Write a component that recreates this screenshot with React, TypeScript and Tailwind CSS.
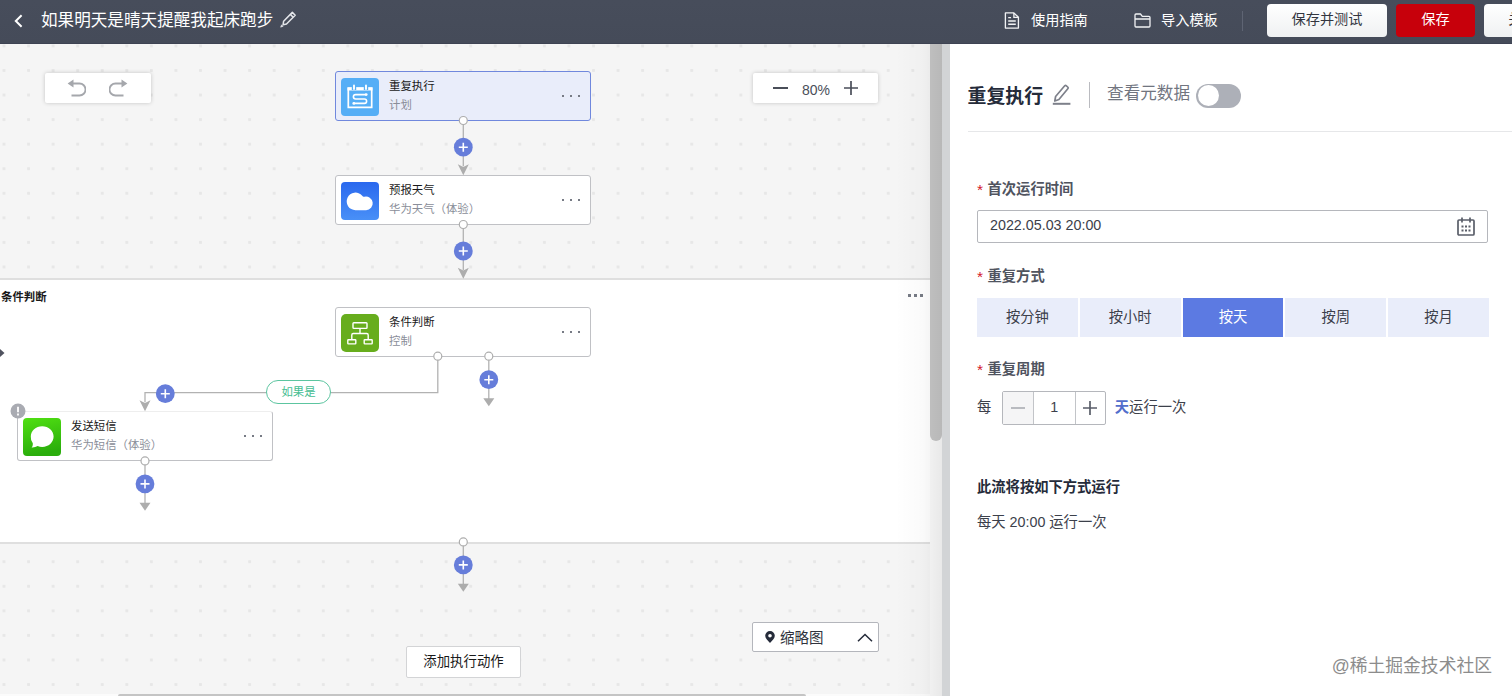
import { useState } from "react";
import type { ReactNode } from "react";
import clsx from "clsx";

const FREQUENCIES = ["按分钟", "按小时", "按天", "按周", "按月"];

const PencilIcon = () => (
  <svg className="w-[17px] h-[17px]" viewBox="0 0 16 16" fill="none" stroke="#e4e6ea" strokeWidth="1.4" strokeLinejoin="round">
    <path d="M3.4 9.6 11.6 1.3l2.7 2.7-8.2 8.3-3.2.6z" />
    <path d="M9.8 3.2l2.6 2.6" />
    <path d="M.6 15.2l.9-2.2 1.4 1.4z" fill="#e4e6ea" strokeWidth="0.6" />
  </svg>
);

const TopBar = () => (
  <header className="h-[43.5px] bg-linear-to-b from-[#474d5b] to-[#454b59] border-b border-[#3e4353] flex items-start flex-shrink-0 text-white overflow-hidden">
    <div className="h-[41px] w-[1002px] flex items-center pl-[13px] flex-shrink-0">
      <svg className="w-[11px] h-[14px]" viewBox="0 0 11 14" fill="none" stroke="#fff" strokeWidth="2">
        <path d="M8.6 1.2 2.8 7l5.8 5.8" />
      </svg>
      <span className="ml-[17px] text-[16.6px] leading-6 whitespace-nowrap">如果明天是晴天提醒我起床跑步</span>
      <span className="ml-[7px] -mt-0.5"><PencilIcon /></span>
    </div>
    <div className="h-[41px] flex items-center text-[14.2px] flex-shrink-0">
      <svg className="w-4 h-[17px] ml-[2px] -mt-px" viewBox="0 0 16 18" fill="none" stroke="#f1f2f4" strokeWidth="1.4">
        <path d="M1 1h9l4.8 4.6V17H1z" strokeLinejoin="round" />
        <path d="M10 1v4.6h4.8M4 6h3M4 9.5h8M4 13h8" />
      </svg>
      <span className="ml-[11px] w-[58px] whitespace-nowrap">使用指南</span>
      <svg className="w-[17px] h-[15px] ml-[45px]" viewBox="0 0 17 15" fill="none" stroke="#f1f2f4" strokeWidth="1.3">
        <path d="M1 13V2q0-1 1-1h4.5l1.8 2.4H15q1 0 1 1V13q0 1-1 1H2q-1 0-1-1zM1 6h15" strokeLinejoin="round" />
      </svg>
      <span className="ml-[10px] w-[58px] whitespace-nowrap">导入模板</span>
      <span className="ml-[23px] w-px h-5 bg-[#5e6473]" />
    </div>
    <div className="flex gap-[9px] ml-[24px] pt-1 text-[14.2px] flex-shrink-0">
      <button className="w-[120px] h-[33px] pb-[2px] rounded-sm bg-linear-to-b from-white to-[#eff1f2] text-[#33363f]">保存并测试</button>
      <button className="w-[79px] h-[33px] pb-[2px] rounded-sm bg-[#c7000b] text-white">保存</button>
      <button className="w-[77px] h-[33px] pb-[2px] rounded-sm bg-linear-to-b from-white to-[#eff1f2] text-[#33363f]">关闭</button>
    </div>
  </header>
);

const ScheduleIcon = () => (
  <svg className="w-[38px] h-[38px]" viewBox="0 0 38 38">
    <rect width="38" height="38" rx="4" fill="#55aef6" />
    <g fill="none" stroke="#fff">
      <path d="M7.3 10h23.400v19.300H7.300z" strokeWidth="1.700" />
      <path d="M6.500 11h25" strokeWidth="3" />
      <path d="M13 7v5M25 7v5" stroke="#55aef6" strokeWidth="4.400" />
      <path d="M13 7.500v3.500M25 7.500v3.500" strokeWidth="1.900" strokeLinecap="round" />
      <path d="M25 16.600H14.600a2.200 2.200 0 0 0 0 4.400h8.800a2.200 2.200 0 0 1 0 4.400H13" strokeWidth="1.600" />
    </g>
    <circle cx="25.2" cy="16.6" r="1.4" fill="#fff" />
    <circle cx="12.8" cy="25.4" r="1.4" fill="#fff" />
  </svg>
);

const WeatherIcon = () => (
  <svg className="w-[38px] h-[38px]" viewBox="0 0 38 38">
    <defs>
      <linearGradient id="weather" x1="0" y1="0" x2="0" y2="1">
        <stop offset="0" stopColor="#2a68ee" />
        <stop offset="1" stopColor="#4990f7" />
      </linearGradient>
    </defs>
    <rect width="38" height="38" rx="4" fill="url(#weather)" />
    <path d="M14.5 28.2a8.8 8.8 0 1 1 6.7-14.5c.7.8 1.1 1.2 2.1 1.1a6.8 6.8 0 1 1 1.8 13.4z" fill="#fff" />
  </svg>
);

const BranchIcon = () => (
  <svg className="w-[38px] h-[38px]" viewBox="0 0 38 38">
    <rect width="38" height="38" rx="5" fill="#67ad1d" />
    <g fill="none" stroke="#fff" strokeWidth="1.4">
      <rect x="12" y="8.8" width="14" height="5.6" rx="0.8" />
      <path d="M19 14.5v5M10.8 25.6v-4.6q0-1.5 1.5-1.5h13.4q1.5 0 1.5 1.5v4.6" />
      <rect x="6.8" y="25.7" width="8" height="4.2" rx="0.6" />
      <rect x="23.2" y="25.7" width="8" height="4.2" rx="0.6" />
    </g>
  </svg>
);

const MessageIcon = () => (
  <svg className="w-[38px] h-[38px]" viewBox="0 0 38 38">
    <defs>
      <linearGradient id="message" x1="0" y1="0" x2="0.2" y2="1">
        <stop offset="0" stopColor="#50df12" />
        <stop offset="1" stopColor="#2aad0c" />
      </linearGradient>
    </defs>
    <rect width="38" height="38" rx="4" fill="url(#message)" />
    <path d="M19.2 8.2c6.4 0 11.4 4.6 11.4 10.4S25.6 29 19.2 29c-1.700 0-3.200-.3-4.600-.9-1.700 1-3.500 1.400-6 1.300 1-.8 1.300-2 1.200-4.100a9.600 9.600 0 0 1-2-6.700c0-5.800 5-10.400 11.400-10.400z" fill="#fff" />
  </svg>
);

interface FlowNodeProps {
  title: string;
  subtitle: string;
  icon: ReactNode;
  className: string;
}

const FlowNode = ({ title, subtitle, icon, className }: FlowNodeProps) => (
  <div className={clsx("absolute w-[256px] h-[50px] border rounded-[3px] flex items-center pl-[5px] pr-[10px]", className)}>
    <div className="mt-px">{icon}</div>
    <div className="ml-[10px] flex-1 text-[11.4px] leading-[19.5px]">
      <div className="text-[#191919]">{title}</div>
      <div className="text-[#8a8e99]">{subtitle}</div>
    </div>
    <div className="flex gap-[6px]">
      <i className="w-[2px] h-[2px] bg-[#777b85]" />
      <i className="w-[2px] h-[2px] bg-[#777b85]" />
      <i className="w-[2px] h-[2px] bg-[#777b85]" />
    </div>
  </div>
);

const Port = ({ x, y }: { x: number; y: number }) => (
  <circle cx={x} cy={y} r="4" fill="#fff" stroke="#adadad" strokeWidth="1.2" />
);

const Plus = ({ x, y }: { x: number; y: number }) => (
  <g>
    <circle cx={x} cy={y} r="9.4" fill="#667dda" />
    <path d={`M${x - 4.5} ${y}h9M${x} ${y - 4.5}v9`} stroke="#fff" strokeWidth="1.6" />
  </g>
);

const Notched = ({ x, y }: { x: number; y: number }) => (
  <path d={`M${x} ${y}l-5.5-11 5.5 2.8 5.5-2.8z`} fill="#adadad" />
);

const Arrow = ({ x, y }: { x: number; y: number }) => (
  <path d={`M${x} ${y}l-5.5-8h11z`} fill="#adadad" />
);

// Координаты соединителей заданы относительно холста
const Connectors = () => (
  <svg className="absolute left-0 top-0 w-[930px] h-[650px]" viewBox="0 43.8 930 650">
    <g fill="none" stroke="#b2b2b2" strokeWidth="1.3">
      <path d="M463.3 120v46M463.3 224v46M437.8 356v36.5H145V402M488.8 356v44M145 461v44M463.3 541v44" />
    </g>
    <Notched x={463.3} y={175} />
    <Notched x={463.3} y={278.5} />
    <Notched x={145} y={411} />
    <Arrow x={488.8} y={406} />
    <Arrow x={145} y={510.5} />
    <Arrow x={463.3} y={591.5} />
    <Port x={463.3} y={120.3} />
    <Port x={463.3} y={224.3} />
    <Port x={437.8} y={356} />
    <Port x={488.8} y={356} />
    <Port x={145} y={460.7} />
    <Port x={463.3} y={541.7} />
    <Plus x={463.3} y={147} />
    <Plus x={463.3} y={250.8} />
    <Plus x={165.3} y={393.5} />
    <Plus x={488.8} y={379.5} />
    <Plus x={145} y={483.7} />
    <Plus x={463.3} y={564.7} />
  </svg>
);

const Canvas = () => (
  <main className="relative w-[950px] flex-shrink-0 overflow-hidden bg-[#f5f5f5] bg-[radial-gradient(circle,#e7e7e7_1.3px,transparent_1.9px)] bg-[size:24.57px_24.57px] bg-[position:-8.3px_14.2px]">
    {/* Блок условия */}
    <section className="absolute left-0 top-[234.5px] w-[930px] h-[265.5px] bg-white border-y-2 border-[#dfdfdf]">
      <div className="flex justify-between items-center pt-[7px] pr-[7px]">
        <h3 className="text-[11.4px] leading-5 pl-px font-bold text-[#191919]">条件判断</h3>
        <div className="flex gap-[3px] -mt-[3px]">
          <i className="w-[3px] h-[3px] bg-[#777b85]" />
          <i className="w-[3px] h-[3px] bg-[#777b85]" />
          <i className="w-[3px] h-[3px] bg-[#777b85]" />
        </div>
      </div>
      <svg className="w-[5px] h-[10px] mt-[41px]" viewBox="0 0 5 10">
        <path d="M0 1l4.5 4L0 9z" fill="#50535f" />
      </svg>
    </section>

    <FlowNode title="重复执行" subtitle="计划" icon={<ScheduleIcon />} className="left-[335px] top-[27.5px] bg-[#e9edfa] border-[#7088dd]" />
    <FlowNode title="预报天气" subtitle="华为天气（体验）" icon={<WeatherIcon />} className="left-[335px] top-[131.5px] bg-white border-[#c0c1c5]" />
    <FlowNode title="条件判断" subtitle="控制" icon={<BranchIcon />} className="left-[335px] top-[263.5px] bg-white border-[#c0c1c5]" />
    <FlowNode title="发送短信" subtitle="华为短信（体验）" icon={<MessageIcon />} className="left-[17px] top-[367.5px] bg-white border-[#c0c1c5] border-t-[#eeeeee]" />

    <Connectors />

    <div className="absolute left-[266px] top-[336.5px] w-[65px] h-[24px] pt-px rounded-full border-[1.5px] border-[#5cc5a0] bg-white text-[#45bd92] text-[11.4px] flex items-center justify-center">如果是</div>
    <svg className="absolute left-[10px] top-[359px] w-4 h-4" viewBox="0 0 16 16">
      <circle cx="8" cy="8" r="7.5" fill="#a9abb2" />
      <path d="M8 3.8v5.4M8 10.6v1.8" stroke="#fff" strokeWidth="1.8" />
    </svg>

    {/* Панели поверх холста */}
    <div className="absolute left-[45px] top-[29.5px] w-[106px] h-[30px] bg-white rounded-xs shadow-[0_0_4px_rgba(0,0,0,0.2)] flex items-center justify-center gap-[23px]">
      <svg className="w-[19px] h-[18px] -ml-[2px]" viewBox="0 0 19 18" fill="none" stroke="#a5a7ac" strokeWidth="1.8">
        <path d="M4 4.5h8.5a6 6 0 0 1 0 12H4.5" />
        <path d="M6.5.6v7.8L.6 4.5z" fill="#a5a7ac" stroke="none" />
      </svg>
      <svg className="w-[19px] h-[18px]" viewBox="0 0 19 18" fill="none" stroke="#a5a7ac" strokeWidth="1.8">
        <path d="M15 4.5H6.5a6 6 0 0 0 0 12h8" />
        <path d="M12.5.6v7.8l5.900-3.900z" fill="#a5a7ac" stroke="none" />
      </svg>
    </div>
    <div className="absolute left-[753px] top-[29.5px] w-[125px] h-[30px] bg-white rounded-xs shadow-[0_0_4px_rgba(0,0,0,0.2)] flex items-center pl-[20px] text-[#4a4e59]">
      <span className="w-[15px] h-[2px] bg-[#4a4e59]" />
      <span className="ml-[14px] w-[29px] text-[14px] leading-5 pt-[3px]">80%</span>
      <svg className="w-[14px] h-[14px] ml-[13px]" viewBox="0 0 14 14" stroke="#4a4e59" strokeWidth="1.7">
        <path d="M0 7h14M7 0v14" />
      </svg>
    </div>
    <button className="absolute left-[406px] top-[602.5px] w-[115px] h-[32px] bg-white border border-[#d3d4d6] rounded-xs text-[13.4px] leading-5 text-[#191919]">添加执行动作</button>
    <button className="absolute left-[752px] top-[578.5px] w-[127px] h-[30px] bg-white border border-[#b4b6bc] rounded-xs flex items-center pl-[12px] pr-[5px] text-[14.5px] text-[#30333d]">
      <svg className="w-[10px] h-[12px]" viewBox="0 0 10 12">
        <path fillRule="evenodd" d="M5 0a4.8 4.8 0 0 1 4.8 4.8C9.8 7.5 7 9.5 5 12 3 9.5.2 7.5.2 4.8A4.8 4.8 0 0 1 5 0zm0 3a1.8 1.8 0 1 0 0 3.6A1.8 1.8 0 0 0 5 3z" fill="#252b3a" />
      </svg>
      <span className="ml-[5px] pt-[3px]">缩略图</span>
      <svg className="ml-auto w-4 h-[9px]" viewBox="0 0 16 9" fill="none" stroke="#252b3a" strokeWidth="1.5">
        <path d="M1 8.2 8 1.5l7 6.7" />
      </svg>
    </button>

    {/* Полосы прокрутки и тень правой панели */}
    <div className="absolute left-0 bottom-0 w-[930px] h-[2.5px] bg-[#fbfbfb]">
      <div className="ml-[118px] w-[688px] h-full rounded-t-sm bg-[#c4c4c4]" />
    </div>
    <div className="absolute left-[930px] top-0 w-[12px] h-full bg-[#fafafa]">
      <div className="h-[397px] rounded-b-full bg-[#c6c6c6]" />
    </div>
    <div className="absolute left-[895px] top-0 w-[55px] h-full bg-linear-to-r from-black/0 via-black/2 to-black/9" />
    <div className="absolute left-[942px] top-0 w-[8px] h-full bg-[#d2d4d6]" />
  </main>
);

const FieldLabel = ({ children }: { children: ReactNode }) => (
  <div className="h-5 flex items-center text-[14.3px] font-bold text-[#50545f]">
    <span className="w-[10.5px] font-normal text-[15.5px] text-[#d3162b]">*</span>
    {children}
  </div>
);

const SettingsPanel = () => {
  const [frequency, setFrequency] = useState("按天");
  const [count, setCount] = useState(1);

  return (
    <aside className="relative flex-1 bg-white min-w-0 text-[14.3px] text-[#3c404b]">
      <div className="ml-[17.5px] h-[88px] pt-[34px] border-b border-[#e6e7e9] flex items-start">
        <h2 className="mt-[5px] text-[18.9px] leading-7 font-bold text-[#252b3a] whitespace-nowrap">重复执行</h2>
        <svg className="w-[19px] h-[21px] ml-[9px] mt-[6px]" viewBox="0 0 19 21" fill="none" stroke="#7d808a" strokeWidth="1.7" strokeLinejoin="round">
          <path d="M2.8 17l.8-4.5L12.7 1.8q.8-.8 1.7 0l1.3 1.2q.9.8.1 1.7L6.9 15.500z" />
          <path d="M.8 19.8h17.6" strokeWidth="2" />
        </svg>
        <span className="ml-[18px] mt-[4px] w-px h-[26px] bg-[#babbc0]" />
        <span className="ml-[17px] mt-[4px] text-[16.6px] leading-6 text-[#71757f] whitespace-nowrap">查看元数据</span>
        <button className="ml-[6px] mt-[6px] w-[45px] h-[24px] rounded-full bg-[#adb0b8] p-[1.5px]">
          <span className="block w-[21px] h-[21px] rounded-full bg-white" />
        </button>
      </div>

      <div className="pl-[27px] pt-[48px]">
        <FieldLabel>首次运行时间</FieldLabel>
        <div className="mt-[10px] w-[510.5px] h-[33px] border border-[#b5b7bc] rounded-xs flex items-center justify-between pl-3 pr-[12px]">
          <span>2022.05.03 20:00</span>
          <svg className="w-[18px] h-[19px]" viewBox="0 0 18 19" fill="none" stroke="#5a5e69" strokeWidth="1.7">
            <rect x="1" y="3" width="16" height="15" rx="1" />
            <path d="M5 .5v5M13 .5v5" />
            <path d="M4.5 9.500h9M4.5 13.500h9" strokeWidth="2" strokeDasharray="2 1.5" />
          </svg>
        </div>

        <div className="mt-[24.5px]"><FieldLabel>重复方式</FieldLabel></div>
        <div className="mt-[10.5px] w-[512px] h-[39px] grid grid-cols-5 gap-[2px]">
          {FREQUENCIES.map((item) => (
            <button
              key={item}
              onClick={() => setFrequency(item)}
              className={clsx("pt-px", item === frequency ? "bg-[#5c7ae2] text-white" : "bg-[#e9edfa] text-[#3c404b]")}
            >
              {item}
            </button>
          ))}
        </div>

        <div className="mt-[23.5px]"><FieldLabel>重复周期</FieldLabel></div>
        <div className="mt-[10.5px] h-[34px] flex items-center">
          <span>每</span>
          <div className="ml-[10.5px] w-[104px] h-[34px] border border-[#b5b7bc] rounded-xs flex">
            <button onClick={() => setCount(Math.max(1, count - 1))} className="w-[30px] bg-[#f5f5f6] flex items-center justify-center">
              <span className="w-[14px] h-[2px] bg-[#b9bbc0]" />
            </button>
            <span className="w-[43px] border-x border-[#c2c4c8] flex items-center justify-center">{count}</span>
            <button onClick={() => setCount(count + 1)} className="flex-1 flex items-center justify-center">
              <svg className="w-[14px] h-[14px]" viewBox="0 0 14 14" stroke="#5a5e69" strokeWidth="1.7">
                <path d="M0 7h14M7 0v14" />
              </svg>
            </button>
          </div>
          <span className="ml-[9px]"><b className="text-[#526ecc]">天</b>运行一次</span>
        </div>

        <h3 className="mt-[52px] leading-5 font-bold text-[#252b3a]">此流将按如下方式运行</h3>
        <p className="mt-[15px] leading-5">每天 20:00 运行一次</p>
      </div>

      <div className="absolute right-[20px] bottom-[18px] text-[17.8px] leading-6 text-[#8c8c8c] [text-shadow:1px_1px_1px_#fff] whitespace-nowrap">@稀土掘金技术社区</div>
    </aside>
  );
};

const App = () => (
  <div className="w-[1512px] h-[696px] flex flex-col overflow-hidden bg-white font-['Liberation_Sans','Noto_Sans_CJK_SC',sans-serif]">
    <TopBar />
    <div className="flex flex-1 min-h-0">
      <Canvas />
      <SettingsPanel />
    </div>
  </div>
);

export default App;
